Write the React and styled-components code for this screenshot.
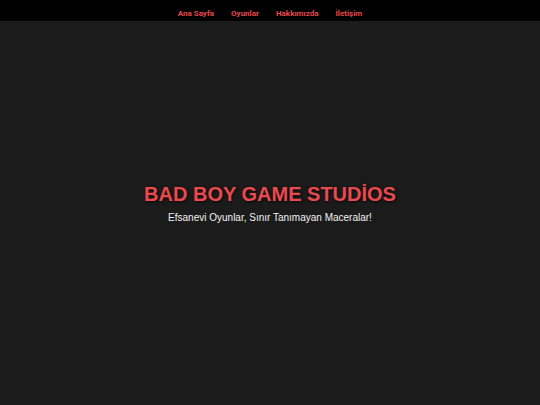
import React from "react";
import styled, { createGlobalStyle } from "styled-components";

const GlobalStyle = createGlobalStyle`
	html, body {
		margin: 0;
		padding: 0;
		background: #1b1b1b;
	}
	* {
		box-sizing: border-box;
	}
`;

const Nav = styled.nav`
	background: #000;
	height: 21px;
	display: flex;
	justify-content: center;
	align-items: center;

	ul {
		display: flex;
		gap: 17px;
		list-style: none;
		margin: 0;
		padding: 0;
	}

	a {
		color: #e8484c;
		text-decoration: none;
		font-family: Roboto, "Liberation Sans", sans-serif;
		font-weight: 700;
		font-size: 8px;
	}
`;

const Hero = styled.header`
	height: 384px;
	display: flex;
	flex-direction: column;
	align-items: center;
	justify-content: center;
	padding-bottom: 20px;
	font-family: "Liberation Sans", Arial, sans-serif;

	h1 {
		margin: 0;
		color: #ea4a4e;
		font-size: 20px;
		font-weight: 700;
		text-shadow: 1px 1px 3px rgba(0, 0, 0, 0.7);
	}

	p {
		margin: 6px 0 0;
		color: #f2f2f2;
		font-size: 10px;
	}
`;

const App = () => {
	return (
		<>
			<GlobalStyle />
			<Nav>
				<ul>
					<li><a href="#">Ana Sayfa</a></li>
					<li><a href="#">Oyunlar</a></li>
					<li><a href="#">Hakkımızda</a></li>
					<li><a href="#">İletişim</a></li>
				</ul>
			</Nav>
			<Hero>
				<h1>BAD BOY GAME STUDİOS</h1>
				<p>Efsanevi Oyunlar, Sınır Tanımayan Maceralar!</p>
			</Hero>
		</>
	);
};

export default App;
